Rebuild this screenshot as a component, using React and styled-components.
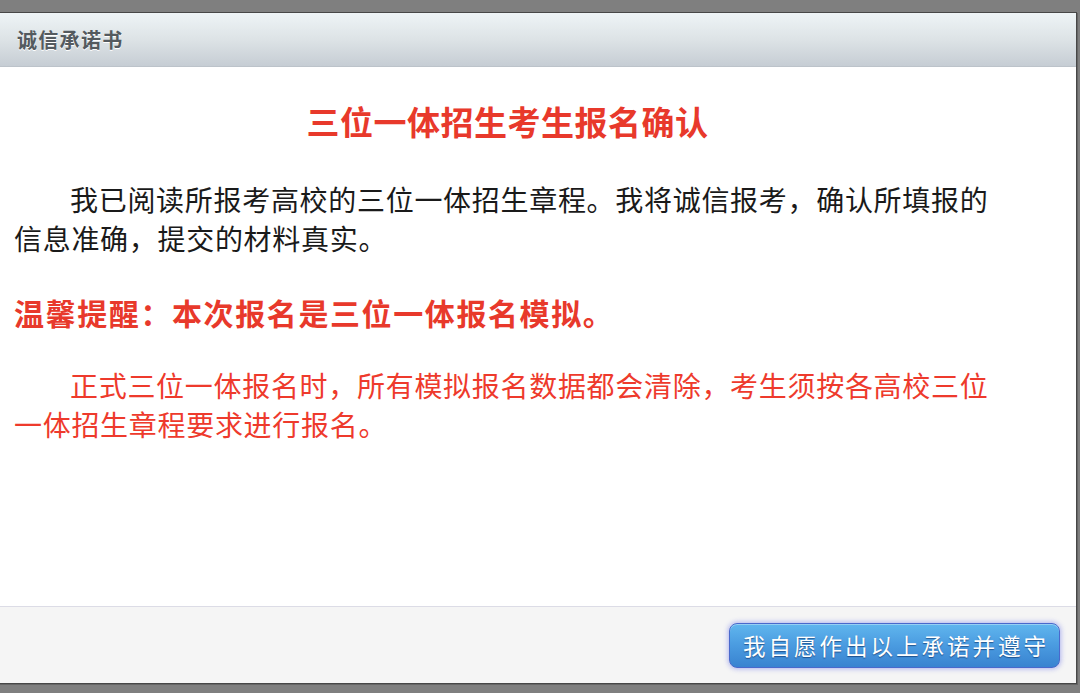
import React from "react";
import styled, { createGlobalStyle } from "styled-components";

const GlobalStyle = createGlobalStyle`
  html, body {
    margin: 0;
    padding: 0;
    background: #7f7f7f;
    overflow: hidden;
  }
  body {
    font-family: "Noto Sans CJK SC", "Noto Sans", sans-serif;
  }
`;

const Page = styled.div`
  width: 1080px;
  height: 693px;
  padding-top: 12px;
  box-sizing: border-box;
`;

const Dialog = styled.div`
  width: 1076px;
  margin-left: -1px;
  border: 1px solid #474747;
  box-shadow: 1px 1px 0 #666;
  display: flex;
  flex-direction: column;
  background: #fff;
`;

const Header = styled.div`
  height: 54px;
  box-sizing: border-box;
  border-bottom: 1px solid #bcc3ca;
  background: linear-gradient(to bottom, #eef4f6 0%, #dde3e6 50%, #c6cdd4 100%);
  display: flex;
  align-items: center;
  padding-left: 17px;
`;

const HeaderTitle = styled.span`
  font-size: 20px;
  font-weight: 700;
  color: #545a5f;
  letter-spacing: 1.3px;
  text-shadow: 0 1px 0 #fff;
`;

const Body = styled.div`
  height: 539px;
  box-sizing: border-box;
  padding: 34px 75px 0 14px;
  display: flex;
  flex-direction: column;
`;

const Title = styled.h1`
  margin: 0;
  text-align: center;
  font-size: 33px;
  line-height: 40px;
  font-weight: 700;
  letter-spacing: 0.5px;
  color: #e8392b;
`;

const Paragraph = styled.p`
  margin: ${(p) => p.$top}px 0 0;
  font-size: 28px;
  line-height: 38.5px;
  letter-spacing: 0.7px;
  text-indent: 56px;
  color: ${(p) => (p.$warn ? "#ee3a2c" : "#1a1a1a")};
`;

const Notice = styled.h2`
  margin: 35px 0 0;
  font-size: 30px;
  line-height: 40px;
  font-weight: 700;
  letter-spacing: 1.6px;
  color: #e8392b;
`;

const Footer = styled.div`
  height: 77px;
  box-sizing: border-box;
  border-top: 1px solid #dcdce6;
  background: #f5f5f5;
  display: flex;
  align-items: center;
  justify-content: flex-end;
  padding-right: 16px;
`;

const ConfirmButton = styled.button`
  width: 331px;
  height: 45px;
  border: 1px solid #4a69cc;
  border-radius: 8px;
  background: linear-gradient(to bottom, #60b6ee 0%, #4a9be0 50%, #3983d0 100%);
  box-shadow: 0 0 5px 1px rgba(90, 100, 230, 0.45), inset 0 1px 0 rgba(255, 255, 255, 0.35);
  color: #fff;
  font-family: "Noto Sans CJK SC", sans-serif;
  font-size: 22.5px;
  letter-spacing: 3px;
  text-shadow: 0 1px 1px rgba(0, 30, 80, 0.55);
  cursor: pointer;
  padding: 0 0 0 3px;
`;

const App = () => (
  <Page>
    <GlobalStyle />
    <Dialog>
      <Header>
        <HeaderTitle>诚信承诺书</HeaderTitle>
      </Header>
      <Body>
        <Title>三位一体招生考生报名确认</Title>
        <Paragraph $top={39}>
          我已阅读所报考高校的三位一体招生章程。我将诚信报考，确认所填报的信息准确，提交的材料真实。
        </Paragraph>
        <Notice>温馨提醒：本次报名是三位一体报名模拟。</Notice>
        <Paragraph $top={34} $warn>
          正式三位一体报名时，所有模拟报名数据都会清除，考生须按各高校三位一体招生章程要求进行报名。
        </Paragraph>
      </Body>
      <Footer>
        <ConfirmButton>我自愿作出以上承诺并遵守</ConfirmButton>
      </Footer>
    </Dialog>
  </Page>
);

export default App;
